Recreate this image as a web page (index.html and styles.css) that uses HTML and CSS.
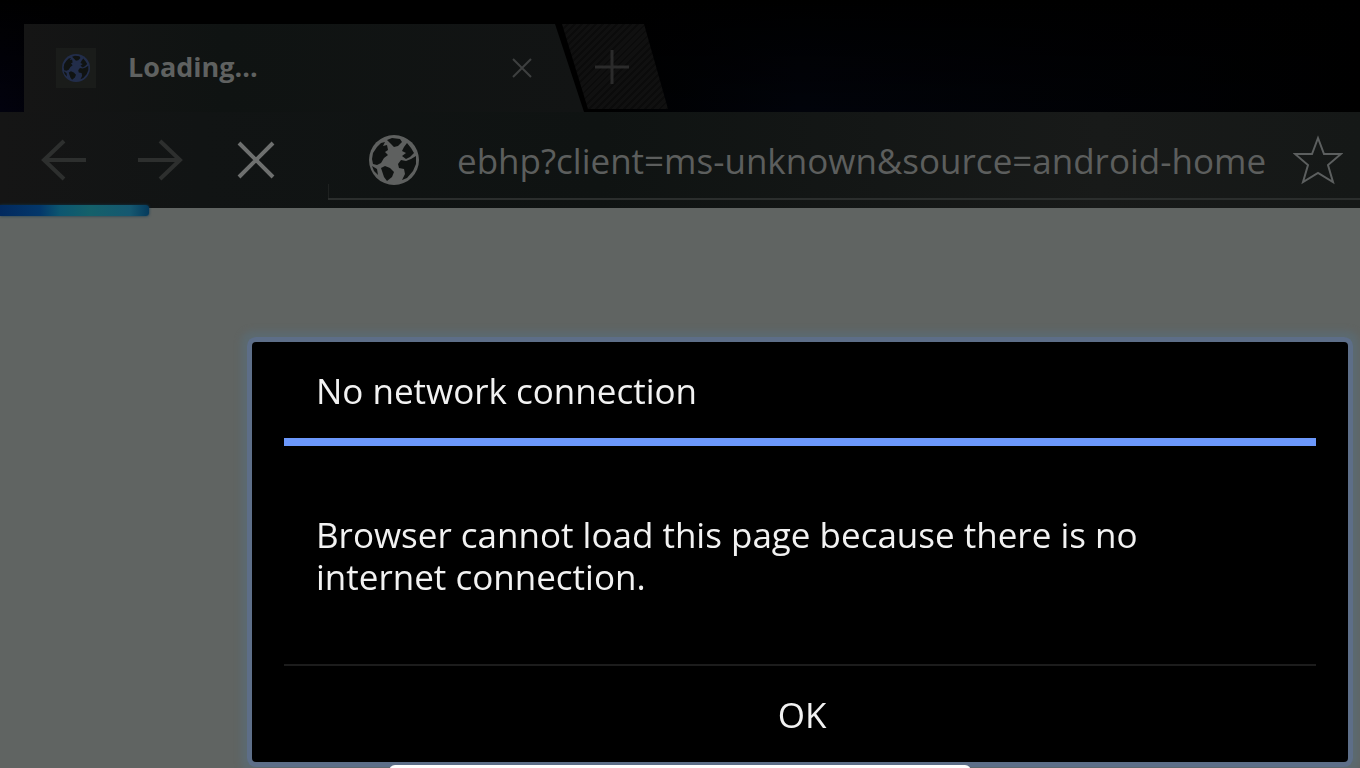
FILE: index.html
```html
<!DOCTYPE html>
<html lang="en">
<head>
    <meta charset="UTF-8">
    <meta name="viewport" content="width=device-width, initial-scale=1.0">
    <title>Loading...</title>
    <link rel="stylesheet" href="styles.css">
</head>
<body>
    <svg class="sprites" aria-hidden="true">
        <symbol id="globe" viewBox="0 0 50 50">
            <circle cx="25" cy="25" r="25" fill="currentColor"/>
            <path class="sea" d="M3 24 L4 18 L8 12 L12 8 L16 7 L14 11 L18 10 L19 15 L16 17 L19 20 L15 23 L12 28 L8 30 L4 29 Z M18 5 L23 3 L31 4 L33 7 L29 11 L25 12 L22 9 Z M38 8 L42 13 L45 18 L41 22 L37 24 L33 21 L37 18 L33 16 L35 12 Z M29 29 L32 25 L37 26 L42 24 L47 21 L47 29 L44 36 L38 43 L33 45 L36 39 L35 34 L30 33 Z M12 33 L16 31 L21 33 L25 37 L23 42 L18 46 L15 42 Z M3 31 L8 34 L9 40 L5 36 Z"/>
        </symbol>
    </svg>

    <header class="tabbar">
        <div class="tab">
            <span class="favicon"><svg width="28" height="28"><use href="#globe"/></svg></span>
            <span class="tab-title">Loading...</span>
            <button class="tab-close" aria-label="Close tab">
                <svg width="20" height="20" viewBox="0 0 20 20"><path d="M1 1 L19 19 M19 1 L1 19"/></svg>
            </button>
        </div>
        <button class="tab-new" aria-label="New tab">
            <svg width="34" height="34" viewBox="0 0 34 34"><path d="M17 0 V34 M0 17 H34"/></svg>
        </button>
    </header>

    <nav class="toolbar">
        <button class="nav-button" aria-label="Back">
            <svg width="48" height="42" viewBox="0 0 48 42"><path d="M46 21 H4 M24 2 L4 21 L24 40"/></svg>
        </button>
        <button class="nav-button" aria-label="Forward">
            <svg width="48" height="42" viewBox="0 0 48 42"><path d="M2 21 H44 M24 2 L44 21 L24 40"/></svg>
        </button>
        <button class="nav-button stop" aria-label="Stop">
            <svg width="38" height="38" viewBox="0 0 38 38"><path d="M2 2 L36 36 M36 2 L2 36"/></svg>
        </button>
        <div class="address">
            <svg class="site-icon" width="50" height="50"><use href="#globe"/></svg>
            <input class="url" type="text" aria-label="Address" value="ebhp?client=ms-unknown&amp;source=android-home">
            <button class="bookmark" aria-label="Bookmark">
                <svg width="50" height="50" viewBox="0 0 50 50"><path d="M25 3 L31 19 L48 19 L35 30 L40 47 L25 38 L10 47 L15 30 L2 19 L19 19 Z"/></svg>
            </button>
        </div>
        <div class="loadbar" role="progressbar" aria-label="Page loading"></div>
    </nav>

    <main class="page"></main>

    <div class="overlay">
        <section class="dialog" role="alertdialog" aria-labelledby="dialog-title" aria-describedby="dialog-text">
            <h1 class="dialog-title" id="dialog-title">No network connection</h1>
            <p class="dialog-text" id="dialog-text">Browser cannot load this page because there is no internet connection.</p>
            <button class="dialog-ok">OK</button>
        </section>
        <div class="handle"></div>
    </div>
</body>
</html>
```

FILE: styles.css
```css
* {
    box-sizing: border-box;
}
body {
    margin: 0;
    height: 100vh;
    display: flex;
    flex-direction: column;
    overflow: hidden;
    background-color: #000;
    font-family: "Open Sans", "Noto Sans", sans-serif;
    font-size: 35px;
}
button {
    display: flex;
    align-items: center;
    justify-content: center;
    padding: 0;
    border: 0;
    background: none;
    color: inherit;
    font: inherit;
}
svg {
    display: block;
    flex: none;
}
.sprites {
    position: absolute;
    width: 0;
    height: 0;
}
.sea {
    fill: #101312;
}

/* tabs */
.tabbar {
    display: flex;
    height: 112px;
    padding: 24px 0 0 24px;
    background: linear-gradient(#000, transparent), linear-gradient(90deg, #02020e, #000 120px, #000 600px, #01030a 800px, #000);
}
.tab {
    display: flex;
    align-items: center;
    width: 560px;
    padding: 0 50px 0 32px;
    background: linear-gradient(90deg, #151515, #0f1312 200px, #121414);
    clip-path: polygon(0 0, calc(100% - 29px) 0, 100% 100%, 0 100%);
}
.favicon {
    display: flex;
    align-items: center;
    justify-content: center;
    width: 40px;
    height: 40px;
    background-color: #1a1c1a;
    color: #222d4a;
}
.tab-title {
    flex: 1;
    margin-left: 32px;
    color: #5f6160;
    font-size: 27px;
    font-weight: bold;
    line-height: 36px;
    padding-bottom: 2px;
}
.tab-close {
    width: 24px;
    height: 40px;
}
.tab-close path {
    stroke: #3e4040;
    stroke-width: 2;
}
.tab-new {
    width: 106px;
    height: 85px;
    margin-left: -22px;
    padding-right: 6px;
    background: repeating-linear-gradient(135deg, #101010 0, #101010 3px, #0b0b0b 3px, #0b0b0b 5px);
    clip-path: polygon(0 0, 82px 0, 100% 100%, 26px 100%);
}
.tab-new path {
    stroke: #2b2b2b;
    stroke-width: 3;
}

/* toolbar */
.toolbar {
    position: relative;
    display: flex;
    height: 96px;
    padding-left: 16px;
    background: linear-gradient(90deg, #151515, #111414 200px, #0f1312 600px, #181a19 1100px, #151817);
}
.nav-button {
    width: 96px;
}
.nav-button path {
    fill: none;
    stroke: #2d2f2e;
    stroke-width: 4;
}
.nav-button.stop path {
    stroke: #6e706f;
}
.address {
    display: flex;
    align-items: center;
    flex: 1;
    min-width: 0;
    margin: 0 0 8px 24px;
    padding-left: 41px;
    border-bottom: 2px solid #2b2e2d;
    background: linear-gradient(#1e2120, #1e2120) left bottom / 1px 14px no-repeat;
}
.site-icon {
    margin-top: 10px;
    color: #5e605f;
}
.url {
    flex: 1;
    min-width: 0;
    height: 60px;
    margin: 10px 0 0 38px;
    padding: 0;
    border: 0;
    outline: 0;
    background: none;
    color: #5c5e5d;
    font: inherit;
}
.bookmark {
    width: 84px;
    padding-top: 10px;
}
.bookmark path {
    fill: none;
    stroke: #5c5f5f;
    stroke-width: 2;
}
.loadbar {
    position: absolute;
    left: 0;
    bottom: -8px;
    width: 149px;
    height: 11px;
    border-radius: 0 3px 3px 0;
    background: linear-gradient(90deg, #02295e, #03376a 40px, #0c5670 60px, #14606a 90px, #155870 130px, #053a5c);
    box-shadow: 0 0 3px #103a50;
}

.page {
    flex: 1;
    background-color: #606462;
}

/* dialog */
.overlay {
    position: fixed;
    inset: 0;
    display: flex;
    align-items: flex-end;
    padding: 0 12px 6px 252px;
}
.dialog {
    flex: 1;
    padding: 0 32px;
    border-radius: 4px;
    background-color: #000;
    color: #f2f2f2;
    box-shadow: 0 0 0 5px #5d6e88, 0 0 6px 11px #5c6a70;
}
.dialog-title {
    margin: 0;
    padding: 2px 32px 0;
    border-bottom: 8px solid #6c98fb;
    font-size: 35px;
    font-weight: normal;
    line-height: 94px;
}
.dialog-text {
    margin: 0;
    padding: 68px 96px 66px 32px;
    border-bottom: 2px solid #1c1c1c;
    line-height: 42px;
}
.dialog-ok {
    width: 100%;
    height: 96px;
    padding-left: 4px;
}
.handle {
    position: absolute;
    left: 389px;
    right: 389px;
    bottom: -9px;
    height: 12px;
    border-radius: 8px;
    background-color: #fff;
}
```
